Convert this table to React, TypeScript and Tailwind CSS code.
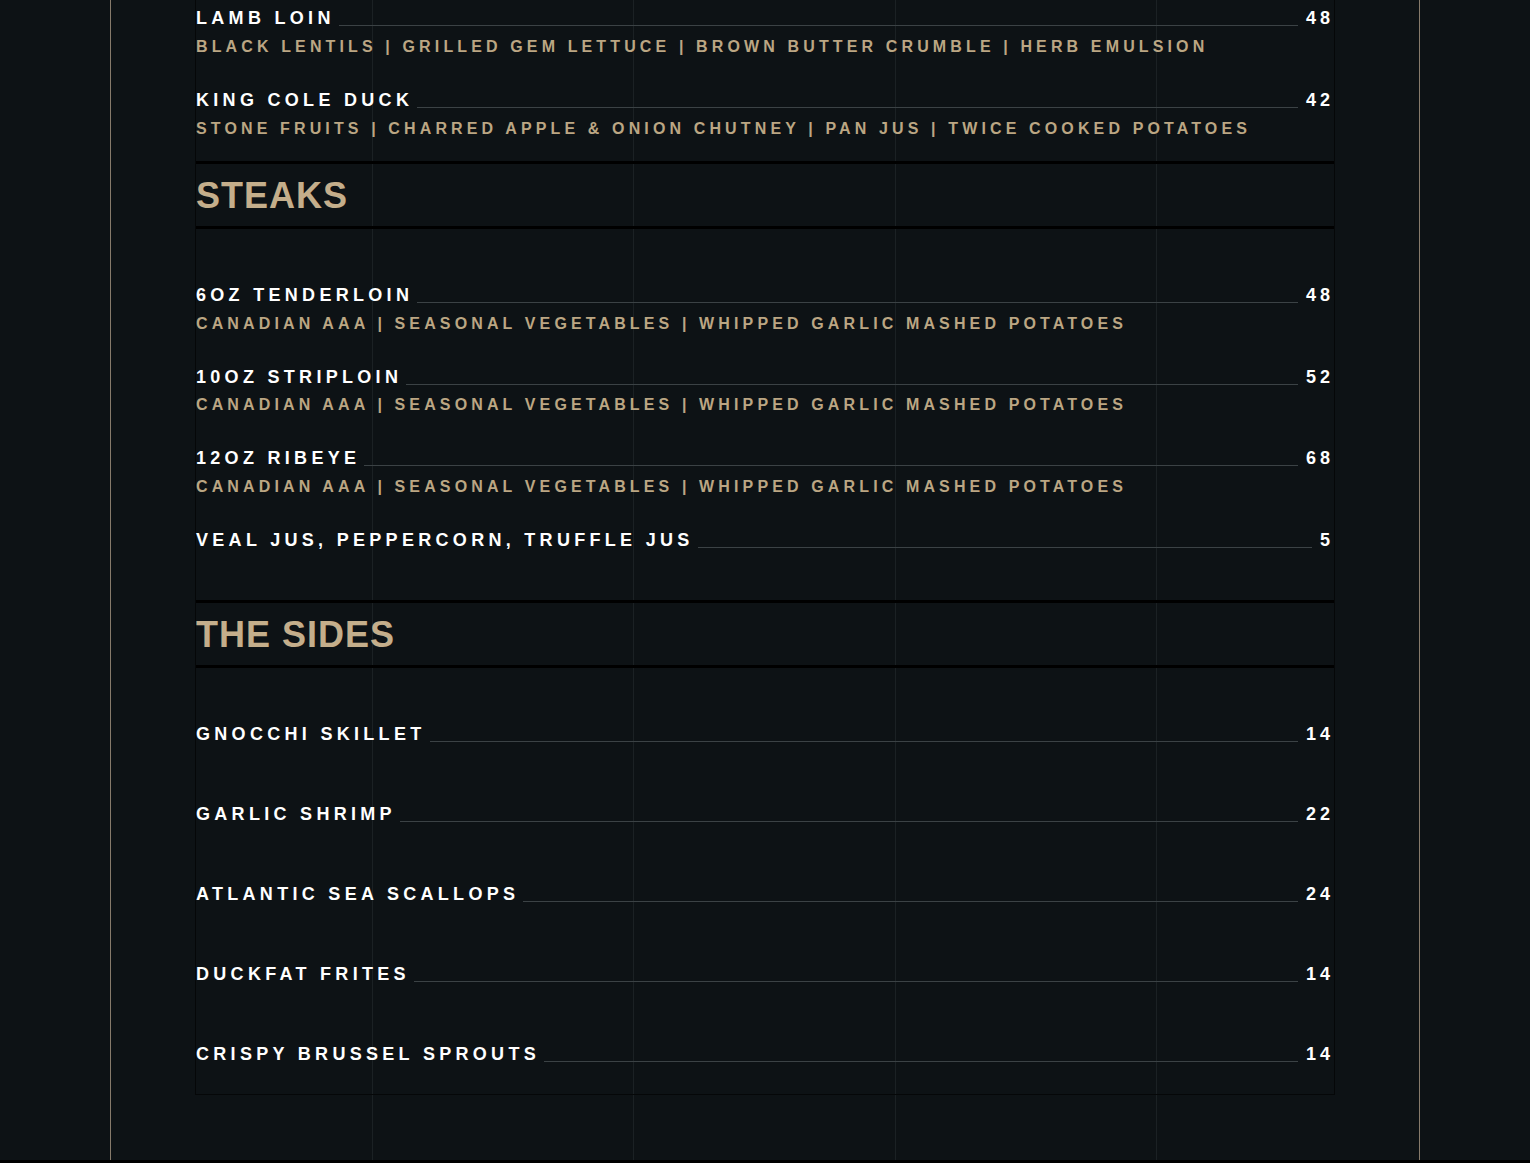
import React from 'react';

type Item = { name: string; price: string; desc?: string };

const mains: Item[] = [
  { name: 'LAMB LOIN', price: '48', desc: 'BLACK LENTILS | GRILLED GEM LETTUCE | BROWN BUTTER CRUMBLE | HERB EMULSION' },
  { name: 'KING COLE DUCK', price: '42', desc: 'STONE FRUITS | CHARRED APPLE & ONION CHUTNEY | PAN JUS | TWICE COOKED POTATOES' },
];

const steaks: Item[] = [
  { name: '6OZ TENDERLOIN', price: '48', desc: 'CANADIAN AAA | SEASONAL VEGETABLES | WHIPPED GARLIC MASHED POTATOES' },
  { name: '10OZ STRIPLOIN', price: '52', desc: 'CANADIAN AAA | SEASONAL VEGETABLES | WHIPPED GARLIC MASHED POTATOES' },
  { name: '12OZ RIBEYE', price: '68', desc: 'CANADIAN AAA | SEASONAL VEGETABLES | WHIPPED GARLIC MASHED POTATOES' },
  { name: 'VEAL JUS, PEPPERCORN, TRUFFLE JUS', price: '5', desc: '' },
];

const sides: Item[] = [
  { name: 'GNOCCHI SKILLET', price: '14' },
  { name: 'GARLIC SHRIMP', price: '22' },
  { name: 'ATLANTIC SEA SCALLOPS', price: '24' },
  { name: 'DUCKFAT FRITES', price: '14' },
  { name: 'CRISPY BRUSSEL SPROUTS', price: '14' },
];

function MenuRow({ item }: { item: Item }) {
  return (
    <div>
      <div className="flex h-7 items-end text-[18px] font-bold leading-7 tracking-[4.3px] text-white">
        <span className="whitespace-nowrap">{item.name}</span>
        <span className="mb-[6px] ml-1 mr-2 h-px flex-1 bg-[#3b4245]" />
        <span className="tracking-[4px]">{item.price}</span>
      </div>
      {item.desc !== undefined && (
        <p className="mt-[2.5px] h-6 whitespace-nowrap text-[16px] font-bold leading-6 tracking-[4.13px] text-[#bba683]">
          {item.desc}
        </p>
      )}
    </div>
  );
}

function SectionHeader({ title }: { title: string }) {
  return (
    <div className="border-y-[3px] border-black pb-[10px] pt-3">
      <h2 className="text-[36px] font-bold leading-10 tracking-[1px] text-[#c4ae8b]">{title}</h2>
    </div>
  );
}

export default function App() {
  return (
    <div
      className="min-h-screen bg-[#0d1215]"
      style={{ fontFamily: '"Liberation Sans", Arial, sans-serif' }}
    >
      <div className="relative mx-auto h-[1160px] w-[1310px] border-x border-[#867a6a]">
        {/* column guides */}
        <div className="pointer-events-none absolute inset-0 grid grid-cols-5">
          <div className="border-r border-[#1b2124]" />
          <div className="border-r border-[#1b2124]" />
          <div className="border-r border-[#1b2124]" />
          <div className="border-r border-[#1b2124]" />
          <div />
        </div>

        <div className="relative px-[84px]">
          <div className="border-x border-b border-[#050708]">
            <div className="flex flex-col gap-[27.5px] pb-[20.5px] pt-1">
              {mains.map((it) => (
                <MenuRow key={it.name} item={it} />
              ))}
            </div>

            <SectionHeader title="STEAKS" />
            <div className="flex flex-col gap-[27.2px] pb-[19.2px] pt-[52px]">
              {steaks.map((it) => (
                <MenuRow key={it.name} item={it} />
              ))}
            </div>

            <SectionHeader title="THE SIDES" />
            <div className="flex flex-col gap-[52px] pb-[26px] pt-[52px]">
              {sides.map((it) => (
                <MenuRow key={it.name} item={it} />
              ))}
            </div>
          </div>
        </div>
      </div>
      <div className="h-[3px] bg-black" />
    </div>
  );
}
